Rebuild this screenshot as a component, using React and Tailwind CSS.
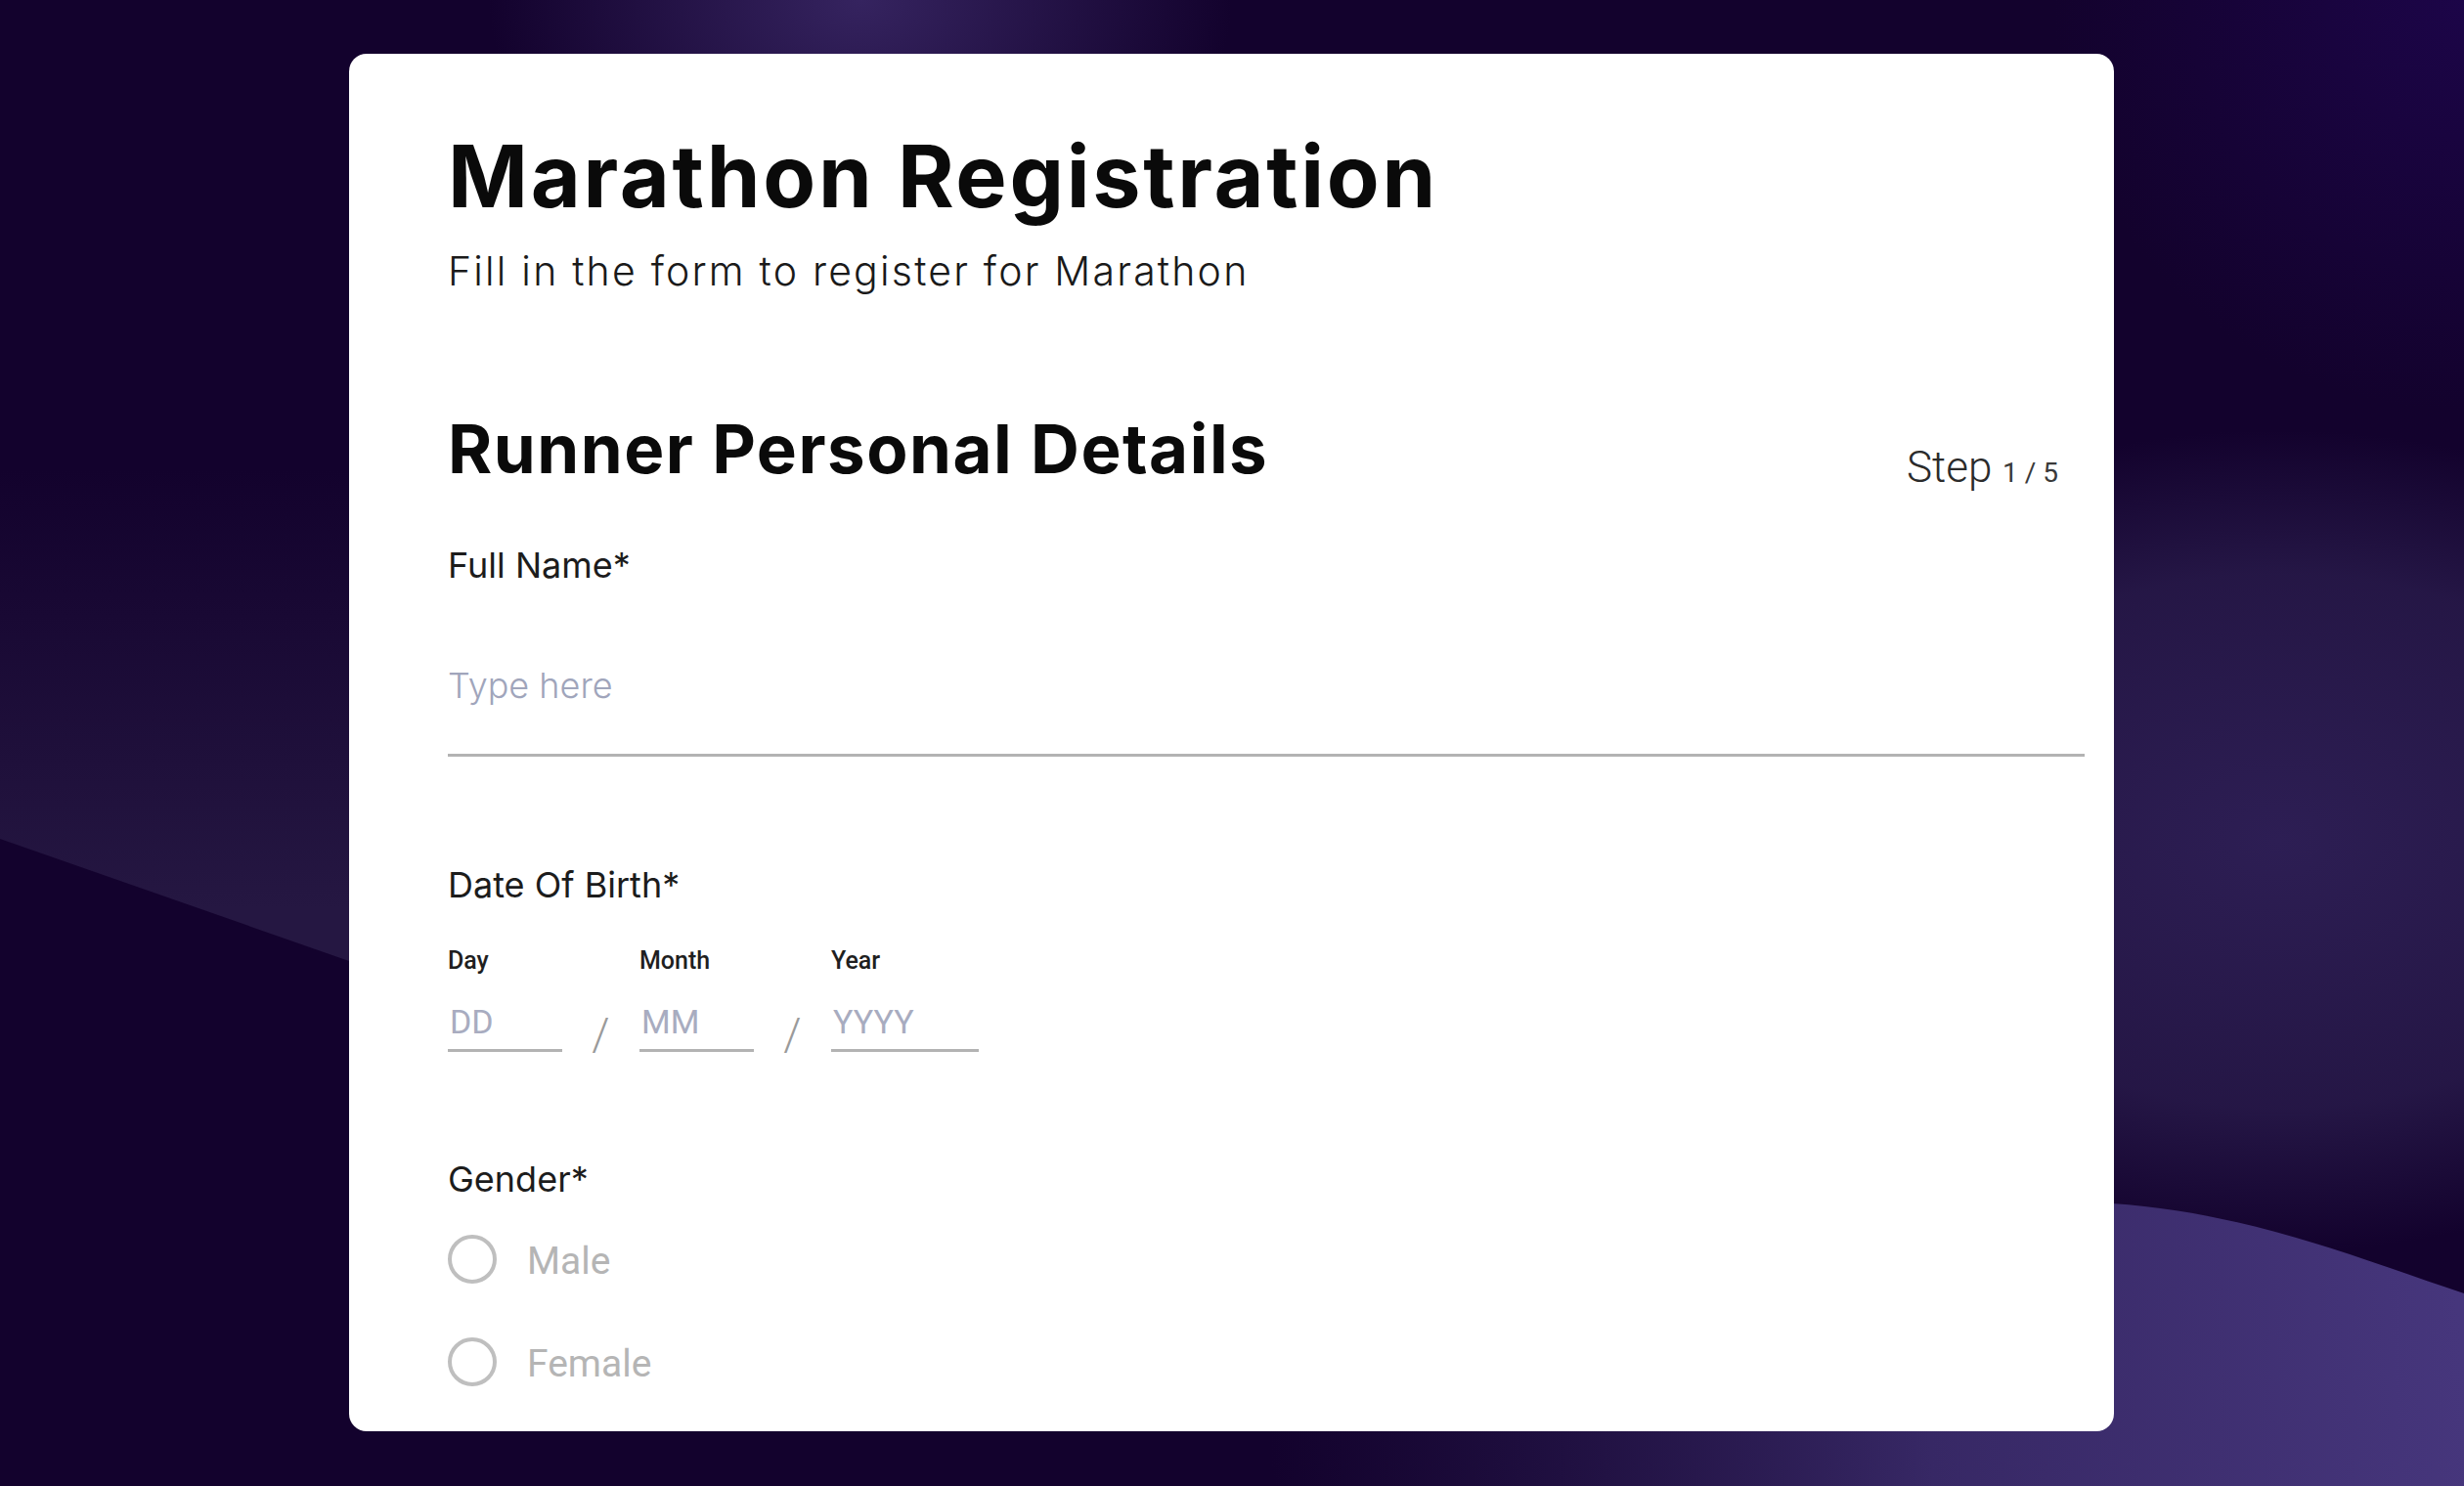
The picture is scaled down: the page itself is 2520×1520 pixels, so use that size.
import React from "react";

const inter = "[font-family:Inter,'Noto_Sans',sans-serif]";
const roboto = "[font-family:Roboto,'Liberation_Sans',sans-serif]";

// Background drawing: dark purple with soft light bands
const Backdrop = () => (
  <svg
    className="col-start-1 row-start-1 block"
    width="2520"
    height="1520"
    viewBox="0 0 2520 1520"
  >
    <defs>
      <radialGradient id="topGlow" cx="880" cy="0" r="380" gradientUnits="userSpaceOnUse" gradientTransform="translate(880 0) scale(1 0.7) translate(-880 0)">
        <stop offset="0" stopColor="#372562" stopOpacity="0.95" />
        <stop offset="1" stopColor="#372562" stopOpacity="0" />
      </radialGradient>
      <radialGradient id="cornerGlow" cx="2520" cy="0" r="420" gradientUnits="userSpaceOnUse">
        <stop offset="0" stopColor="#1c0548" />
        <stop offset="1" stopColor="#1c0548" stopOpacity="0" />
      </radialGradient>
      <radialGradient id="rightGlow" cx="2330" cy="860" r="560" gradientUnits="userSpaceOnUse" gradientTransform="translate(2330 860) scale(1.1 0.75) translate(-2330 -860)">
        <stop offset="0" stopColor="#2d1e54" />
        <stop offset="0.65" stopColor="#281a4a" stopOpacity="0.85" />
        <stop offset="1" stopColor="#281a4a" stopOpacity="0" />
      </radialGradient>
      <linearGradient id="leftBand" x1="0" y1="480" x2="0" y2="930" gradientUnits="userSpaceOnUse">
        <stop offset="0" stopColor="#251742" stopOpacity="0" />
        <stop offset="1" stopColor="#251742" />
      </linearGradient>
      <linearGradient id="bottomWave" x1="1300" y1="1500" x2="2520" y2="1400" gradientUnits="userSpaceOnUse">
        <stop offset="0" stopColor="#2a1c50" stopOpacity="0" />
        <stop offset="0.55" stopColor="#372865" />
        <stop offset="1" stopColor="#46367c" />
      </linearGradient>
    </defs>
    <rect width="2520" height="1520" fill="#13022d" />
    <rect width="2520" height="1520" fill="url(#cornerGlow)" />
    <rect width="2520" height="1520" fill="url(#topGlow)" />
    <rect width="2520" height="1520" fill="url(#rightGlow)" />
    <path d="M0 420 L420 420 L420 1005 L0 858 Z" fill="url(#leftBand)" />
    <path d="M1000 1520 C1400 1330 1850 1225 2160 1231 C2300 1240 2420 1290 2520 1323 L2520 1520 Z" fill="url(#bottomWave)" />
  </svg>
);

const FieldLabel = ({ children, className = "" }) => (
  <div className={`${inter} text-[36px] leading-none text-[#1c1c1c] ${className}`}>
    {children}
  </div>
);

const DatePart = ({ label, placeholder, width }) => (
  <div className="flex flex-col" style={{ width }}>
    <div className={`${roboto} text-[25px] leading-none font-medium text-[#1f1f1f]`}>
      {label}
    </div>
    <input
      type="text"
      placeholder={placeholder}
      className={`${roboto} mt-[33px] block w-full h-[48px] pl-[2px] pb-[11px] text-[34px] leading-none text-[#333] placeholder:text-[#a8acc0] border-b-[3px] border-[#b3b3b3] outline-none bg-transparent`}
    />
  </div>
);

const Slash = () => (
  <div className="w-[79px] flex flex-col justify-end items-center">
    <span className={`${roboto} -mb-[5px] text-[46px] leading-none font-light text-[#9a9a9a]`}>
      /
    </span>
  </div>
);

const Radio = ({ label }) => (
  <label className="flex items-center gap-[31px]">
    <span className="w-[50px] h-[50px] rounded-full border-[4px] border-[#bfbfbf] shrink-0" />
    <span className={`${roboto} pt-[4px] text-[39px] leading-none text-[#b5b5b5]`}>{label}</span>
  </label>
);

export default function App() {
  return (
    <div className="w-[2520px] h-[1520px] grid overflow-hidden bg-[#13022d]">
      <Backdrop />
      <div className="col-start-1 row-start-1 pt-[55px] pl-[357px]">
        <div className="w-[1805px] h-[1409px] bg-white rounded-[18px] overflow-hidden pl-[101px] pr-[30px] pt-[81px]">
          <h1 className={`${inter} text-[88px] leading-none font-bold tracking-[2.7px] text-[#0a0a0a]`}>
            Marathon Registration
          </h1>
          <p className={`${inter} mt-[33px] text-[41px] leading-none font-light tracking-[2.2px] text-[#1a1a1a]`}>
            Fill in the form to register for Marathon
          </p>

          <div className="mt-[127px] flex justify-between items-start">
            <h2 className={`${inter} text-[69px] leading-none font-bold tracking-[1.5px] text-[#0a0a0a]`}>
              Runner Personal Details
            </h2>
            <div className={`${roboto} mt-[31px] mr-[27px] flex items-baseline text-[#2b2b2b]`}>
              <span className="text-[44px] leading-none font-light">Step&nbsp;</span>
              <span className="text-[28px] leading-none text-[#3a3a3a]">1 / 5</span>
            </div>
          </div>

          <FieldLabel className="mt-[60px]">Full Name*</FieldLabel>
          <input
            type="text"
            placeholder="Type here"
            className={`${inter} mt-[87px] block w-full h-[91px] pb-[52px] text-[36px] leading-none font-light text-[#333] placeholder:text-[#a0a5bb] border-b-[3px] border-[#b3b3b3] outline-none bg-transparent`}
          />

          <FieldLabel className="mt-[113px]">Date Of Birth*</FieldLabel>
          <div className="mt-[47px] flex">
            <DatePart label="Day" placeholder="DD" width={117} />
            <Slash />
            <DatePart label="Month" placeholder="MM" width={117} />
            <Slash />
            <DatePart label="Year" placeholder="YYYY" width={151} />
          </div>

          <FieldLabel className="mt-[112px]">Gender*</FieldLabel>
          <div className="mt-[39px] flex flex-col gap-[55px]">
            <Radio label="Male" />
            <Radio label="Female" />
          </div>
        </div>
      </div>
    </div>
  );
}
